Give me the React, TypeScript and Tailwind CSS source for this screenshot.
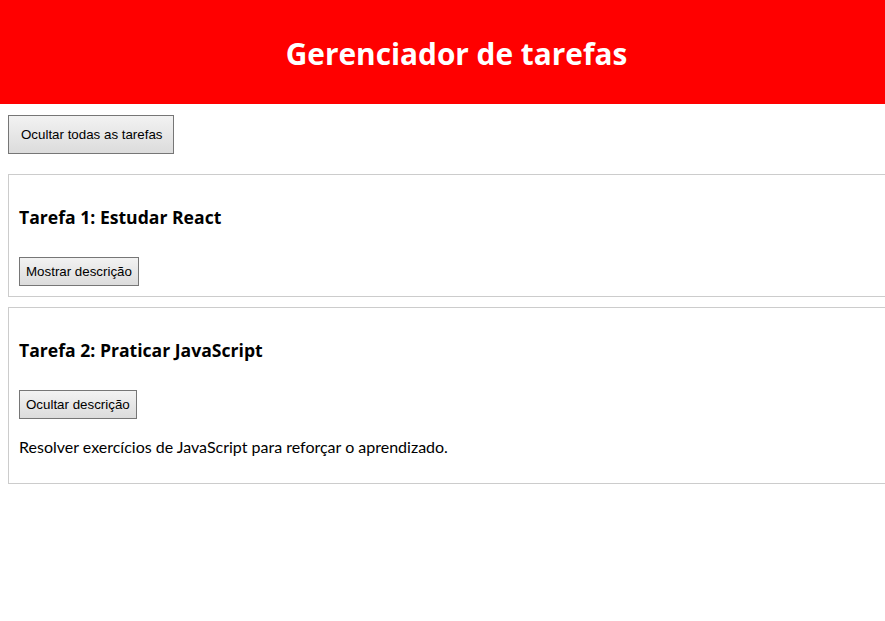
import { useState } from 'react'

type Task = {
    id: number
    title: string
    description: string
}

const tasks: Task[] = [
    { id: 1, title: 'Estudar React', description: 'Ler a documentação e criar componentes com React.' },
    { id: 2, title: 'Praticar JavaScript', description: 'Resolver exercícios de JavaScript para reforçar o aprendizado.' },
]

const btn =
    "border border-[#767676] bg-gradient-to-b from-[#f2f2f2] to-[#dcdcdc] text-black text-[13.33px] whitespace-nowrap font-['Liberation_Sans',Arial,sans-serif]"

const TaskCard = ({ task, initialOpen }: { task: Task; initialOpen: boolean }) => {
    const [open, setOpen] = useState<boolean>(initialOpen)

    return (
        <div className="box-content w-full mb-2.5 px-2.5 pt-2.5 pb-2.5 border border-[#cccccc]">
            <h3 className="mt-[19px] text-[17.6px] leading-[26px] font-bold text-black font-['Open_Sans',sans-serif]">
                Tarefa {task.id}: {task.title}
            </h3>
            <button
                className={`${btn} mt-[27px] px-1.5 py-1.5 leading-[15px] h-[29px]`}
                onClick={() => setOpen((o) => !o)}
            >
                {open ? 'Ocultar descrição' : 'Mostrar descrição'}
            </button>
            {open && <p className="mt-[17px] mb-[16px] text-base leading-[21px] text-black">{task.description}</p>}
        </div>
    )
}

const App = () => {
    const [visible, setVisible] = useState<boolean>(true)

    return (
        <div className="min-h-screen w-full overflow-x-hidden bg-white font-['Lato','Open_Sans',sans-serif]">
            <header className="h-[104px] pl-[28px] bg-[#ff0000] flex items-center justify-center">
                <h1 className="pt-[3px] text-[29.8px] font-bold text-white leading-none font-['Open_Sans',sans-serif]">
                    Gerenciador de tarefas
                </h1>
            </header>
            <div className="pl-2">
                <button
                    className={`${btn} mt-[11px] w-[166px] h-[39px] px-3 leading-4`}
                    onClick={() => setVisible((v) => !v)}
                >
                    {visible ? 'Ocultar todas as tarefas' : 'Mostrar todas as tarefas'}
                </button>
                {visible && (
                    <div className="mt-[20px]">
                        <TaskCard task={tasks[0]} initialOpen={false} />
                        <TaskCard task={tasks[1]} initialOpen={true} />
                    </div>
                )}
            </div>
        </div>
    )
}

export default App
